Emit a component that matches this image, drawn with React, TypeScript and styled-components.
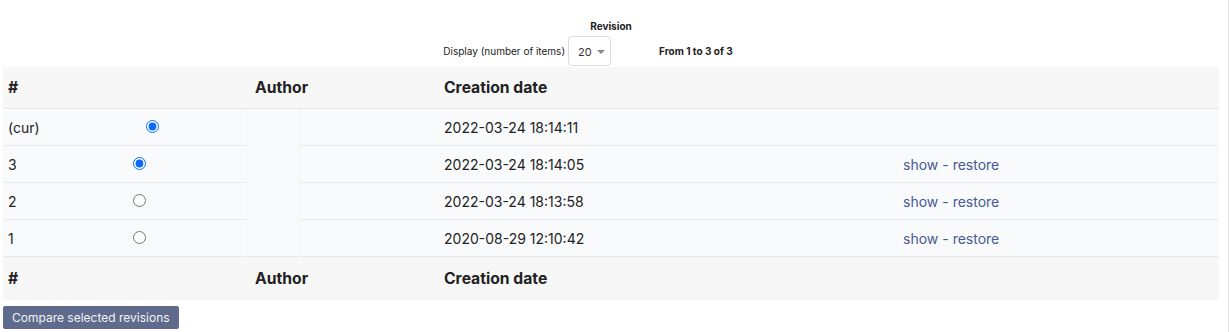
import React from "react";
import styled, { createGlobalStyle } from "styled-components";

const GlobalStyle = createGlobalStyle`
  body {
    margin: 0;
    background: #ffffff;
    font-family: Inter, "Noto Sans", sans-serif;
    color: #222222;
  }
`;

const Page = styled.div`
  padding: 18px 9px 0 3px;
  border-right: 1px solid #e2e2e2;
  min-height: 332px;
  box-sizing: border-box;
`;

const Title = styled.div`
  text-align: center;
  font-size: 10px;
  font-weight: 700;
  line-height: 16px;
`;

const Pager = styled.div`
  display: flex;
  align-items: center;
  justify-content: center;
  padding: 2px 46px 1px 0;
  font-size: 10px;
`;

const PagerLabel = styled.span`
  margin-right: 3px;
`;

const Select = styled.div`
  display: flex;
  align-items: center;
  gap: 5px;
  width: 43px;
  height: 30px;
  box-sizing: border-box;
  padding: 2px 0 0 9px;
  border: 1px solid #dddddd;
  border-radius: 4px;
  font-size: 11px;
  color: #333;
`;

const Caret = styled.span`
  width: 0;
  height: 0;
  border-left: 4px solid transparent;
  border-right: 4px solid transparent;
  border-top: 4px solid #888;
`;

const Count = styled.span`
  margin-left: 48px;
  font-weight: 700;
`;

const Table = styled.table`
  width: 100%;
  border-collapse: collapse;
  table-layout: fixed;
  font-size: 14px;
`;

const HeadRow = styled.tr`
  background: #f7f7f7;
`;

const Th = styled.th<{ $foot?: boolean; $indent?: number }>`
  text-align: left;
  font-size: 15.7px;
  font-weight: 700;
  padding: ${(p) => (p.$foot ? "1px" : "0")} 5px 1px ${(p) => p.$indent ?? 5}px;
  border-top: ${(p) => (p.$foot ? "1px solid #e8e8e8" : "none")};
  height: ${(p) => (p.$foot ? "41px" : "40px")};
  border-bottom: ${(p) => (p.$foot ? "none" : "1px solid #e8e8e8")};
`;

const Row = styled.tr`
  background: #f9fafc;
  height: 37px;
`;

const Td = styled.td<{ $last?: boolean }>`
  padding: 0 5px;
  border-bottom: ${(p) => (p.$last ? "none" : "1px solid #ebebeb")};
  white-space: nowrap;
`;

const RadioTd = styled(Td)<{ $current?: boolean }>`
  padding-left: ${(p) => (p.$current ? "26px" : "13px")};
`;

const AuthorTd = styled.td`
  border-left: 1px solid #f5f6f8;
  border-right: 1px solid #f5f6f8;
  background: #f9fafc;
`;

const Radio = styled.input`
  display: block;
  width: 13px;
  height: 13px;
  margin: 0 0 1px;
  accent-color: #0a6cff;
`;

const Link = styled.a`
  color: #475a90;
  text-decoration: none;
`;

const Dash = styled.span`
  color: #475a90;
`;

const CompareButton = styled.button`
  margin-top: 6px;
  height: 23px;
  padding: 0 9px;
  border: none;
  border-radius: 2px;
  background: #5f6b8d;
  color: #f2f2f2;
  font-family: Inter, "Noto Sans", sans-serif;
  font-size: 12px;
`;

type Revision = {
  num: string;
  date: string;
  checked: boolean;
  current?: boolean;
};

const revisions: Revision[] = [
  { num: "(cur)", date: "2022-03-24 18:14:11", checked: true, current: true },
  { num: "3", date: "2022-03-24 18:14:05", checked: true },
  { num: "2", date: "2022-03-24 18:13:58", checked: false },
  { num: "1", date: "2020-08-29 12:10:42", checked: false },
];

const HeaderCells = ({ foot }: { foot?: boolean }) => (
  <HeadRow>
    <Th $foot={foot} colSpan={2}>#</Th>
    <Th $foot={foot} $indent={8} colSpan={2}>Author</Th>
    <Th $foot={foot}>Creation date</Th>
    <Th $foot={foot}></Th>
  </HeadRow>
);

export default function App() {
  return (
    <>
      <GlobalStyle />
      <Page>
        <Title>Revision</Title>
        <Pager>
          <PagerLabel>Display (number of items)</PagerLabel>
          <Select>
            20 <Caret />
          </Select>
          <Count>From 1 to 3 of 3</Count>
        </Pager>
        <Table>
          <colgroup>
            <col style={{ width: 117 }} />
            <col style={{ width: 127 }} />
            <col style={{ width: 52 }} />
            <col style={{ width: 140 }} />
            <col style={{ width: 459 }} />
            <col />
          </colgroup>
          <thead>
            <HeaderCells />
          </thead>
          <tbody>
            {revisions.map((r, i) => {
              const last = i === revisions.length - 1;
              return (
                <Row key={r.num}>
                  <Td $last={last}>{r.num}</Td>
                  <RadioTd $last={last} $current={r.current}>
                    <Radio type="radio" name={`rev-${i}`} defaultChecked={r.checked} />
                  </RadioTd>
                  {i === 0 && <AuthorTd rowSpan={revisions.length} />}
                  <Td $last={last}></Td>
                  <Td $last={last}>{r.date}</Td>
                  <Td $last={last}>
                    {!r.current && (
                      <>
                        <Link href="#">show</Link>
                        <Dash> - </Dash>
                        <Link href="#">restore</Link>
                      </>
                    )}
                  </Td>
                </Row>
              );
            })}
          </tbody>
          <tfoot>
            <HeaderCells foot />
          </tfoot>
        </Table>
        <CompareButton>Compare selected revisions</CompareButton>
      </Page>
    </>
  );
}
